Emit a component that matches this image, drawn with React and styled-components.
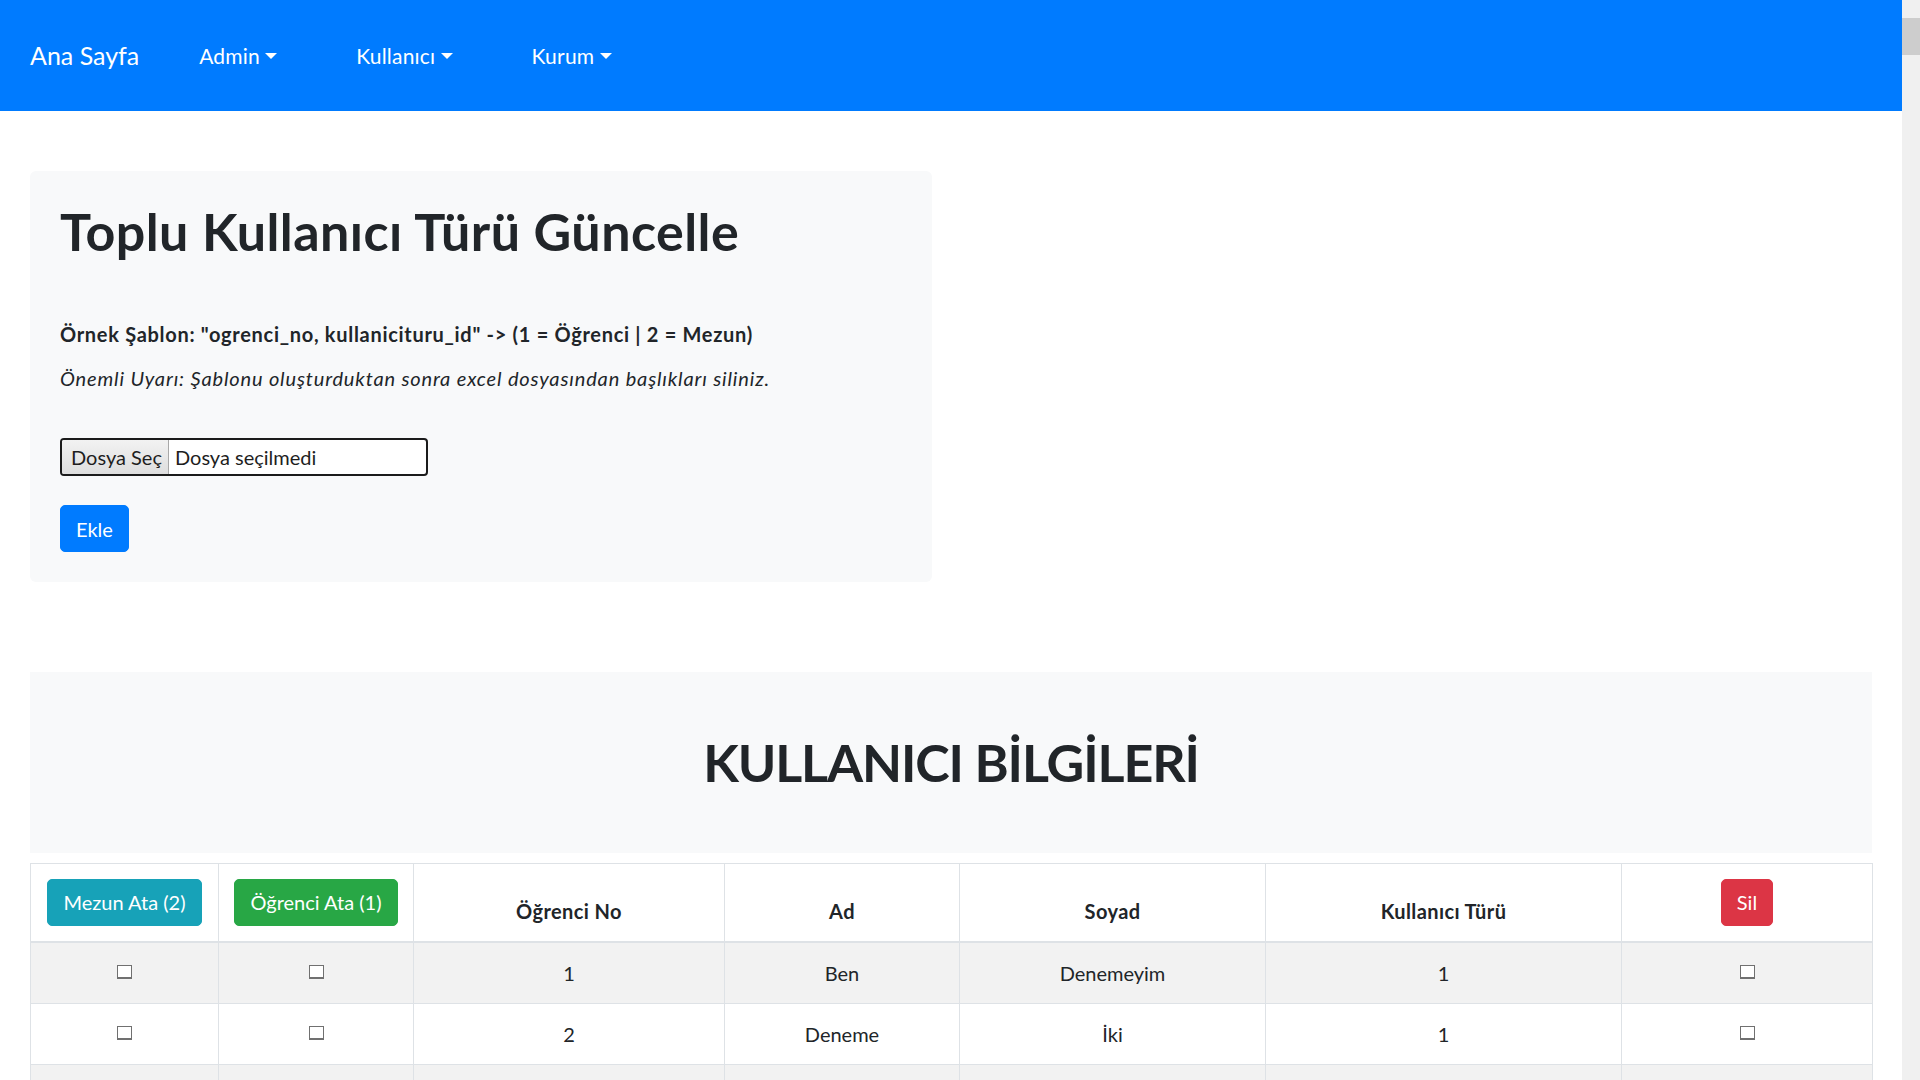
import React from "react";
import styled, { createGlobalStyle } from "styled-components";

const GlobalStyle = createGlobalStyle`
  html, body {
    margin: 0;
    padding: 0;
    height: 100%;
    overflow: hidden;
  }
  body {
    font-family: Lato, "Open Sans", sans-serif;
    font-size: 20px;
    line-height: 1.5;
    color: #212529;
    background: #fff;
  }
  *, *::before, *::after {
    box-sizing: border-box;
  }
`;

/* scroll area; the right border stands in for the classic 18px window scrollbar */
const Page = styled.div`
  height: 100vh;
  overflow-y: scroll;
  border-right: 18px solid #f0f0f0;
  border-image: linear-gradient(
      #f0f0f0 18px,
      #cdcdcd 18px,
      #cdcdcd 55px,
      #f0f0f0 55px
    )
    0 18 0 0;
  &::-webkit-scrollbar {
    width: 0;
  }
`;

const Navbar = styled.nav`
  display: flex;
  align-items: center;
  height: 111px;
  padding: 0 30px;
  background: #007bff;
`;

const Brand = styled.a`
  margin-right: 60px;
  font-size: 25px;
  color: #fff;
  text-decoration: none;
`;

const NavList = styled.ul`
  display: flex;
  gap: 79px;
  margin: 0;
  padding: 0;
  list-style: none;
`;

const NavLink = styled.a`
  font-size: 21px;
  letter-spacing: 0.2px;
  color: #fff;
  text-decoration: none;
  &::after {
    content: "";
    display: inline-block;
    margin-left: 0.25em;
    vertical-align: 0.25em;
    border-top: 0.29em solid;
    border-right: 0.29em solid transparent;
    border-left: 0.29em solid transparent;
  }
`;

const Main = styled.main`
  padding: 60px 30px 0;
`;

const UploadCard = styled.section`
  width: 902px;
  padding: 29px 30px 30px;
  background: #f8f9fa;
  border-radius: 6px;
`;

const Heading = styled.h1`
  margin: 0;
  font-size: 52px;
  font-weight: 700;
  line-height: 1.2;
  letter-spacing: ${(p) => p.$spacing || "0.45px"};
`;

const Template = styled.p`
  margin: 57px 0 0;
  font-weight: 700;
  letter-spacing: 0.7px;
`;

const Warning = styled.p`
  margin: 14px 0 0;
  font-style: italic;
  letter-spacing: 0.85px;
`;

const FileBox = styled.label`
  display: flex;
  width: 368px;
  height: 38px;
  margin-top: 45px;
  border: 2px solid #1b1b1b;
  border-radius: 4px;
  background: #fff;
  line-height: 34px;
  color: #1e1e1e;
  overflow: hidden;
`;

const FileButton = styled.span`
  padding: 0 6px 0 9px;
  background: linear-gradient(#f2f2f2, #dedede);
  border-right: 1px solid #a8a8a8;
`;

const FileName = styled.span`
  padding-left: 6px;
`;

const colors = {
  primary: "#007bff",
  info: "#17a2b8",
  success: "#28a745",
  danger: "#dc3545",
};

const Button = styled.button`
  display: inline-block;
  margin: ${(p) => (p.$top ? "29px 0 0" : "0")};
  padding: 7.5px 15px;
  font-family: inherit;
  font-size: 20px;
  line-height: 1.5;
  color: #fff;
  background: ${(p) => colors[p.$variant]};
  border: 1px solid ${(p) => colors[p.$variant]};
  border-radius: 5px;
  cursor: pointer;
`;

const Banner = styled.section`
  margin-top: 90px;
  padding: 59px 0;
  background: #f8f9fa;
  text-align: center;
`;

const Table = styled.table`
  width: 100%;
  margin-top: 10px;
  border-collapse: collapse;
  table-layout: fixed;

  th,
  td {
    padding: 15px;
    border: 1px solid #dee2e6;
    text-align: center;
    vertical-align: top;
  }

  thead th {
    vertical-align: bottom;
    border-bottom: 2px solid #dee2e6;
    font-weight: 700;
    letter-spacing: 0.4px;
  }

  tbody tr:nth-of-type(odd) {
    background: rgba(0, 0, 0, 0.05);
  }
`;

const Check = styled.input.attrs({ type: "checkbox" })`
  appearance: none;
  display: inline-block;
  width: 15px;
  height: 14px;
  margin: 0;
  vertical-align: 2px;
  background: #fff;
  border: 1.5px solid #707070;
  border-bottom-width: 2px;
  border-radius: 0;
`;

const columnWidths = [188, 195, 311, 235, 306, 356, 251];

const users = [
  { no: 1, ad: "Ben", soyad: "Denemeyim", tur: 1 },
  { no: 2, ad: "Deneme", soyad: "İki", tur: 1 },
  { no: 3, ad: "Deneme", soyad: "Üç", tur: 1 },
];

export default function App() {
  return (
    <>
      <GlobalStyle />
      <Page>
        <Navbar>
          <Brand href="#">Ana Sayfa</Brand>
          <NavList>
            <li><NavLink href="#">Admin</NavLink></li>
            <li><NavLink href="#">Kullanıcı</NavLink></li>
            <li><NavLink href="#">Kurum</NavLink></li>
          </NavList>
        </Navbar>

        <Main>
          <UploadCard>
            <Heading>Toplu Kullanıcı Türü Güncelle</Heading>
            <Template>
              Örnek Şablon: "ogrenci_no, kullanicituru_id" -&gt; (1 = Öğrenci | 2 = Mezun)
            </Template>
            <Warning>
              Önemli Uyarı: Şablonu oluşturduktan sonra excel dosyasından başlıkları siliniz.
            </Warning>
            <FileBox>
              <FileButton>Dosya Seç</FileButton>
              <FileName>Dosya seçilmedi</FileName>
            </FileBox>
            <Button $variant="primary" $top>Ekle</Button>
          </UploadCard>

          <Banner>
            <Heading $spacing="-1.1px">KULLANICI BİLGİLERİ</Heading>
          </Banner>

          <Table>
            <colgroup>
              {columnWidths.map((w, i) => (
                <col key={i} style={{ width: w }} />
              ))}
            </colgroup>
            <thead>
              <tr>
                <th><Button $variant="info">Mezun Ata (2)</Button></th>
                <th><Button $variant="success">Öğrenci Ata (1)</Button></th>
                <th>Öğrenci No</th>
                <th>Ad</th>
                <th>Soyad</th>
                <th>Kullanıcı Türü</th>
                <th><Button $variant="danger">Sil</Button></th>
              </tr>
            </thead>
            <tbody>
              {users.map((u) => (
                <tr key={u.no}>
                  <td><Check /></td>
                  <td><Check /></td>
                  <td>{u.no}</td>
                  <td>{u.ad}</td>
                  <td>{u.soyad}</td>
                  <td>{u.tur}</td>
                  <td><Check /></td>
                </tr>
              ))}
            </tbody>
          </Table>
        </Main>
      </Page>
    </>
  );
}
